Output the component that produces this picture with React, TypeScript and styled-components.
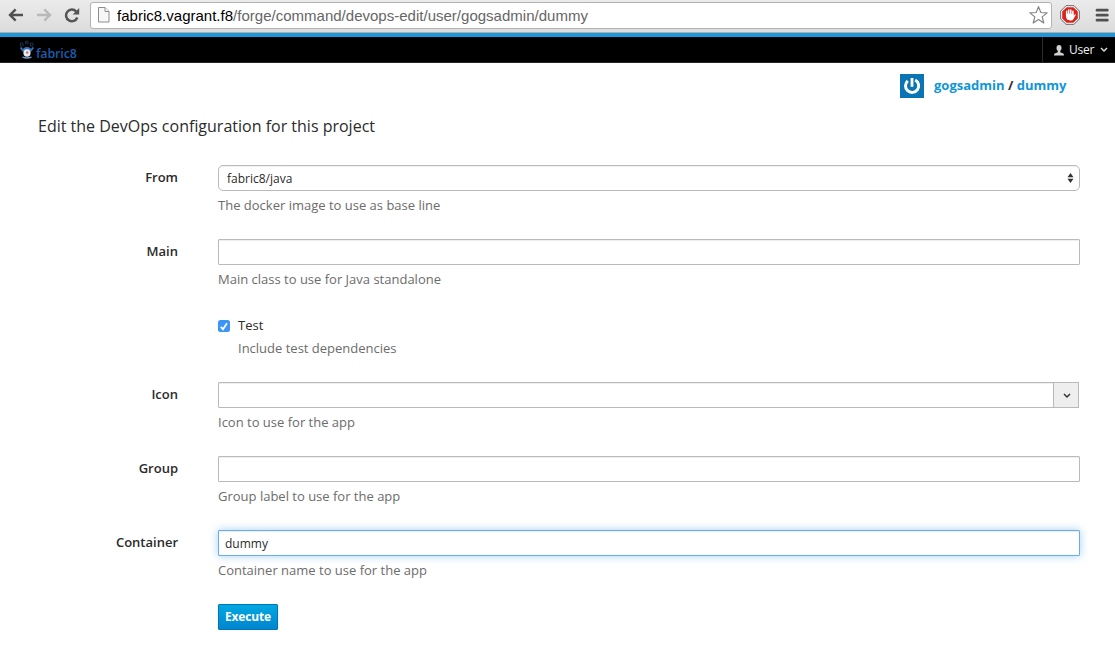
import React from 'react';
import styled, { createGlobalStyle, css } from 'styled-components';

const GlobalStyle = createGlobalStyle`
  * { box-sizing: border-box; }
  body {
    margin: 0;
    background: #fff;
    color: #2b2b2b;
    font: 13px/20px "Open Sans", "Noto Sans", sans-serif;
    overflow: hidden;
  }
`;

const BrowserBar = styled.div`
  display: flex;
  align-items: center;
  height: 33px;
  padding: 0 5px 2px 8px;
  background: linear-gradient(#ebebeb, #dcdcdc);
  border-bottom: 1px solid #b3aca8;
`;

const NavIcons = styled.div`
  display: flex;
  gap: 12px;
  width: 82px;
  svg { display: block; flex: none; }
`;

const AddressBar = styled.div`
  display: flex;
  align-items: center;
  flex: 1;
  height: 27px;
  padding: 0 3px 0 6px;
  background: #fff;
  border: 1px solid #b3b3b3;
  border-radius: 3px;
  svg { display: block; flex: none; }
`;

const Url = styled.div`
  flex: 1;
  margin-left: 7px;
  padding-top: 2px;
  color: #666;
  font: 15px/20px "Liberation Sans", Arial, sans-serif;
  letter-spacing: 0.01px;
  white-space: nowrap;
`;

const UrlHost = styled.span`
  color: #000;
`;

const Extensions = styled.div`
  display: flex;
  align-items: center;
  gap: 15px;
  margin-left: 8px;
  padding-right: 1px;
  svg { display: block; }
`;

const AppNav = styled.header`
  display: flex;
  justify-content: space-between;
  height: 30px;
  padding-left: 19px;
  background: #000;
  border-top: 4px solid #1b98dc;
  border-bottom: 1px solid #222;
`;

const Brand = styled.div`
  display: flex;
  align-items: flex-start;
  padding-top: 3px;
  color: #1c5cab;
  svg { display: block; }
`;

const BrandName = styled.span`
  margin: 5px 0 0 1px;
  font: 600 12.5px/18px "Open Sans", sans-serif;
  letter-spacing: -0.15px;
`;

const UserMenu = styled.div`
  display: flex;
  align-items: center;
  width: 73px;
  padding: 1px 0 0 11px;
  border-left: 1px solid #2b2b2b;
  color: #f1f1f1;
  font-size: 12px;
  letter-spacing: -0.2px;
  svg { display: block; }
  span { margin: 0 6px 0 5px; }
`;

const Page = styled.main`
  padding: 11px 35px 0 38px;
`;

const ProjectPath = styled.div`
  display: flex;
  align-items: flex-start;
  justify-content: flex-end;
  height: 24px;
  padding-right: 13px;
  font-weight: 700;
  line-height: 22px;
  white-space: pre;
  svg { display: block; margin-right: 10px; }
`;

const ProjectLink = styled.a`
  color: #0f96d8;
`;

const PathText = styled.span`
  width: 133px;
`;

const Title = styled.h1`
  margin: 16px 0 27px;
  font-size: 16px;
  font-weight: 400;
  line-height: 24px;
  height: 24px;
`;

const FormRow = styled.div<{ $height?: number }>`
  display: grid;
  grid-template-columns: 140px 862px;
  column-gap: 40px;
  align-items: start;
  height: ${({ $height = 74 }) => $height}px;
`;

const Label = styled.label`
  padding-top: 2px;
  font-weight: 600;
  text-align: right;
`;

const fieldBox = css`
  display: flex;
  align-items: center;
  height: 26px;
  border: 1px solid #bababa;
  background: #fff;
  font-size: 12px;
  color: #2b2b2b;
`;

const TextField = styled.input<{ $active?: boolean }>`
  ${fieldBox}
  display: block;
  width: 100%;
  padding: 1px 6px 0;
  font-family: inherit;
  outline: none;
  border-radius: 1px;
  box-shadow: inset 0 1px 1px rgba(0, 0, 0, 0.075);
  ${({ $active }) => $active && css`
    border-color: #66afe9;
    box-shadow: inset 0 1px 1px rgba(0, 0, 0, 0.075), 0 0 8px rgba(102, 175, 233, 0.6);
  `}
`;

const SelectField = styled.div`
  ${fieldBox}
  justify-content: space-between;
  padding: 0 5px 0 8px;
  border-radius: 5px;
  box-shadow: inset 0 1px 1px rgba(0, 0, 0, 0.06);
  span { padding-top: 2px; }
`;

const Combo = styled.div`
  display: flex;
  width: 861px;
`;

const ComboButton = styled.div`
  ${fieldBox}
  justify-content: center;
  flex: none;
  width: 26px;
  margin-left: -1px;
  padding-top: 2px;
  padding-left: 1px;
  background: #eee;
`;

const Help = styled.div<{ $top?: number }>`
  margin-top: ${({ $top = 4 }) => $top}px;
  color: #6c6c6c;
`;

const CheckGroup = styled.div`
  display: grid;
  grid-template-columns: 12px 1fr;
  column-gap: 8px;
  padding-top: 2px;
`;

const CheckBox = styled.span`
  display: flex;
  align-items: center;
  justify-content: center;
  width: 12px;
  height: 12px;
  margin-top: 5px;
  border-radius: 2.5px;
  background: #3b94f8;
`;

const ExecuteButton = styled.button`
  width: 60px;
  height: 26px;
  padding: 0;
  border: 1px solid #0076b7;
  border-radius: 1px;
  background: linear-gradient(#00a8e1, #0085cf);
  box-shadow: 0 2px 3px rgba(0, 0, 0, 0.12);
  color: #fff;
  font: 700 12px/22px "Open Sans", sans-serif;
  letter-spacing: -0.15px;
`;

const BackArrow = ({ color }: { color: string }) => (
  <svg width="16" height="14" viewBox="0 0 16 14" fill="none" stroke={color} strokeWidth="2.4">
    <path d="M15 7H2.5M7.7 1.3L2 7l5.7 5.7" />
  </svg>
);

const ForwardArrow = ({ color }: { color: string }) => (
  <svg width="16" height="14" viewBox="0 0 16 14" fill="none" stroke={color} strokeWidth="2.4">
    <path d="M1 7h12.5M8.3 1.3L14 7l-5.7 5.7" />
  </svg>
);

const Reload = () => (
  <svg width="16" height="15" viewBox="0 0 16 15">
    <path d="M12.2 3.5A5.8 5.8 0 1 0 13.3 9.5" fill="none" stroke="#555" strokeWidth="2.5" />
    <path d="M15.2 0v6.6H8.7z" fill="#555" />
  </svg>
);

const PageIcon = () => (
  <svg width="13" height="16" viewBox="0 0 13 16" fill="#f7f7f7" stroke="#8d8d8d">
    <path d="M1.500 .5h6.500l4 4v10.500h-10.500z" />
    <path d="M8 .5v4h4" />
  </svg>
);

const Star = () => (
  <svg width="19" height="18" viewBox="0 0 19 18" fill="#fff" stroke="#858585" strokeWidth="1.2" strokeLinejoin="round">
    <path d="M9.500 .6l2.300 5.900 6.300.4-4.900 4 1.600 6.100-5.300-3.400-5.300 3.400 1.600-6.100-4.900-4 6.300-.4z" />
  </svg>
);

const AdBlock = () => (
  <svg width="20" height="20" viewBox="0 0 20 20">
    <path d="M6 .7h8L19.300 6v8L14 19.300H6L.7 14V6z" fill="#fff" stroke="#666" />
    <path d="M6.600 2.200h6.800l4.400 4.400v6.800l-4.400 4.400H6.600l-4.400-4.400V6.600z" fill="#d9231c" />
    <path
      d="M6.700 10.500V6.300M8.700 9.500V5M10.800 9.500V4.900M12.900 10V6.200"
      stroke="#fff" strokeWidth="1.500" strokeLinecap="round"
    />
    <path d="M5.900 8.800h7.700v2l1.200-1.400c.6-.5 1.200.1.900.7l-2.500 4.300c-.7 1.200-4.800 1.400-6 .1-1-1.100-1.300-3-1.300-5.700z" fill="#fff" />
  </svg>
);

const MenuIcon = () => (
  <svg width="14" height="14" viewBox="0 0 14 14" stroke="#505050" strokeWidth="2.800" strokeLinecap="round">
    <path d="M2 2.200h10.300M2 7.200h10.300M2 12.200h10.300" />
  </svg>
);

const Mascot = () => (
  <svg width="16" height="19" viewBox="0 0 16 19">
    <g fill="none" stroke="#1b314c" strokeWidth="1">
      <path d="M1.500 3h2.500v3H1.500zM6.500 1.200h2.500v2.500H6.500zM11.500 3h2.500v3h-2.500z" />
    </g>
    <path d="M1.500 7.500l3.200 4M14.300 7.500l-3.200 4" stroke="#3a75b6" strokeWidth="1.800" />
    <path d="M3.500 10.500q.5-3.500 4.500-3.500t4.500 3.500z" fill="#3574b8" />
    <ellipse cx="8" cy="13" rx="3.600" ry="3.700" fill="#e3ebf2" />
    <circle cx="8.200" cy="12.500" r="1.200" fill="#d66d4b" />
    <path d="M3.500 17.200q4.500 1.600 9 0" fill="none" stroke="#6e9cc9" strokeWidth="1.400" />
  </svg>
);

const Person = () => (
  <svg width="10" height="11" viewBox="0 0 10 11" fill="#d1d1d1">
    <ellipse cx="5" cy="3" rx="2.500" ry="3" />
    <path d="M3.800 5h2.400v2.200L9.300 8.500q.7.300.7 2H0q0-1.700.7-2l3.100-1.300z" />
  </svg>
);

const Chevron = ({ color, size = 8 }: { color: string; size?: number }) => (
  <svg width={size} height="6" viewBox="0 0 8 6" fill="none" stroke={color} strokeWidth="1.500">
    <path d="M1 1l3 3 3-3" />
  </svg>
);

const Updown = () => (
  <svg width="7" height="10" viewBox="0 0 7 10" fill="#333">
    <path d="M3.500 0l3 4.300h-6zM3.500 10l3-4.300h-6z" />
  </svg>
);

const Avatar = () => (
  <svg width="24" height="24" viewBox="0 0 24 24">
    <path d="M0 0h24v24H0z" fill="#0a74b5" />
    <path d="M7.800 6.800A6.600 6.600 0 1 0 15.200 6" fill="none" stroke="#fff" strokeWidth="3" />
    <path d="M12 4v8.800" stroke="#fff" strokeWidth="2.800" />
  </svg>
);

const Check = () => (
  <svg width="8" height="9" viewBox="0 0 8 9" fill="none" stroke="#fff" strokeWidth="1.800">
    <path d="M.8 4.800l2.200 2.400L7 1.300" />
  </svg>
);

export default function App() {
  return (
    <>
      <GlobalStyle />
      <BrowserBar>
        <NavIcons>
          <BackArrow color="#505050" />
          <ForwardArrow color="#b9b9b9" />
          <Reload />
        </NavIcons>
        <AddressBar>
          <PageIcon />
          <Url>
            <UrlHost>fabric8.vagrant.f8</UrlHost>/forge/command/devops-edit/user/gogsadmin/dummy
          </Url>
          <Star />
        </AddressBar>
        <Extensions>
          <AdBlock />
          <MenuIcon />
        </Extensions>
      </BrowserBar>
      <AppNav>
        <Brand>
          <Mascot />
          <BrandName>fabric8</BrandName>
        </Brand>
        <UserMenu>
          <Person />
          <span>User</span>
          <Chevron color="#d8d8d8" />
        </UserMenu>
      </AppNav>
      <Page>
        <ProjectPath>
          <Avatar />
          <PathText>
            <ProjectLink>gogsadmin</ProjectLink> / <ProjectLink>dummy</ProjectLink>
          </PathText>
        </ProjectPath>
        <Title>Edit the DevOps configuration for this project</Title>
        <FormRow>
          <Label>From</Label>
          <div>
            <SelectField>
              <span>fabric8/java</span>
              <Updown />
            </SelectField>
            <Help>The docker image to use as base line</Help>
          </div>
        </FormRow>
        <FormRow>
          <Label>Main</Label>
          <div>
            <TextField />
            <Help>Main class to use for Java standalone</Help>
          </div>
        </FormRow>
        <FormRow $height={69}>
          <span />
          <CheckGroup>
            <CheckBox><Check /></CheckBox>
            <div>
              Test
              <Help $top={3}>Include test dependencies</Help>
            </div>
          </CheckGroup>
        </FormRow>
        <FormRow>
          <Label>Icon</Label>
          <div>
            <Combo>
              <TextField />
              <ComboButton><Chevron color="#333" /></ComboButton>
            </Combo>
            <Help>Icon to use for the app</Help>
          </div>
        </FormRow>
        <FormRow>
          <Label>Group</Label>
          <div>
            <TextField />
            <Help>Group label to use for the app</Help>
          </div>
        </FormRow>
        <FormRow>
          <Label>Container</Label>
          <div>
            <TextField $active defaultValue="dummy" />
            <Help>Container name to use for the app</Help>
          </div>
        </FormRow>
        <FormRow $height={26}>
          <span />
          <ExecuteButton>Execute</ExecuteButton>
        </FormRow>
      </Page>
    </>
  );
}
